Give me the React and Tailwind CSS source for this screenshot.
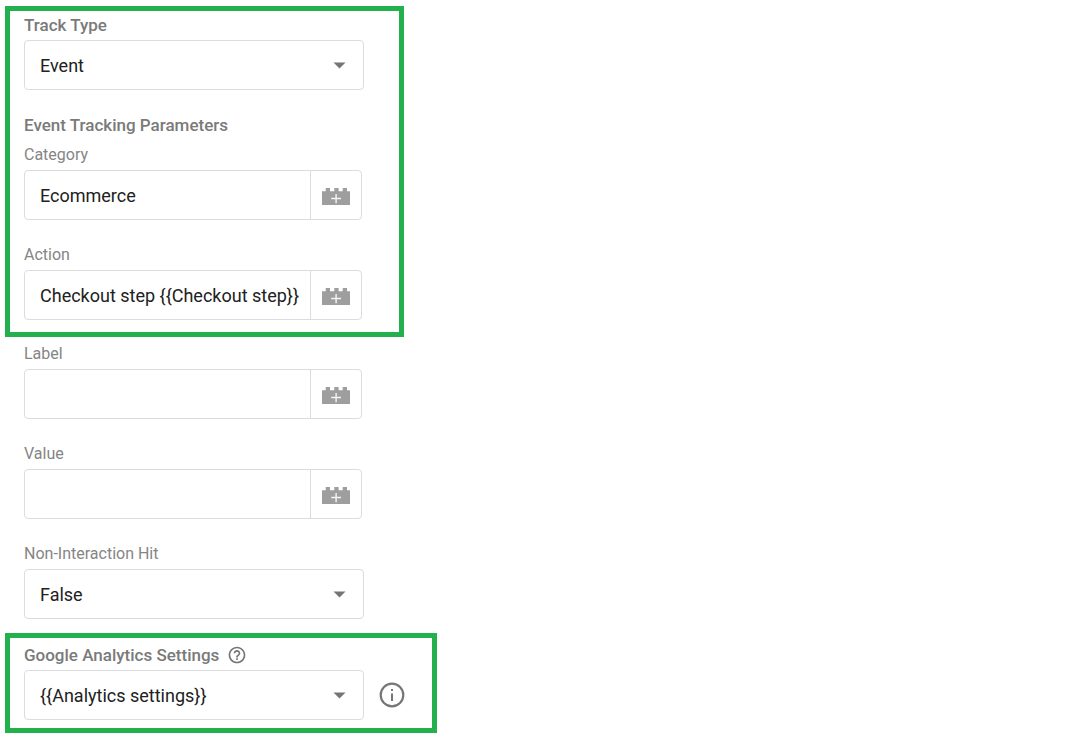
import React, { useId, useState } from "react";

function BrickIcon() {
  return (
    <svg width="28" height="17" viewBox="0 0 28 17" aria-hidden="true">
      <path
        fill="#9e9e9e"
        d="M0 3.3h3.7V0H8v3.3h4.3V0h4.3v3.3h4.1V0H25v3.3h3V17H0z"
      />
      <path stroke="#f5f5f5" strokeWidth="1.4" d="M9.2 10.5H19M14.1 6v9.2" />
    </svg>
  );
}

function HelpIcon() {
  return (
    <svg width="20" height="20" viewBox="0 0 24 24" fill="#757575" aria-hidden="true">
      <path d="M11 18h2v-2h-2v2zm1-16C6.48 2 2 6.48 2 12s4.48 10 10 10 10-4.48 10-10S17.52 2 12 2zm0 18c-4.41 0-8-3.59-8-8s3.59-8 8-8 8 3.59 8 8-3.59 8-8 8zm0-14c-2.21 0-4 1.79-4 4h2c0-1.1.9-2 2-2s2 .9 2 2c0 2-3 1.75-3 5h2c0-2.25 3-2.5 3-5 0-2.21-1.79-4-4-4z" />
    </svg>
  );
}

function InfoIcon() {
  return (
    <svg width="26" height="26" viewBox="0 0 26 26" aria-hidden="true">
      <circle cx="13" cy="13" r="11.3" fill="none" stroke="#757575" strokeWidth="2.2" />
      <path fill="#757575" d="M12 7h2v2h-2zM12 11.5h2v7.5h-2z" />
    </svg>
  );
}

function Label({ htmlFor, bold, children }) {
  return (
    <label
      htmlFor={htmlFor}
      className={
        bold
          ? "text-[17px] leading-[20px] font-medium text-[#7a7a7a]"
          : "text-[16px] leading-[20px] text-[#858585]"
      }
    >
      {children}
    </label>
  );
}

function SelectField({ label, options, bold, help, info }) {
  const id = useId();
  const [value, setValue] = useState(options[0]);

  return (
    <div className="flex flex-col gap-[5px]">
      <div className="flex h-5 items-center gap-2">
        <Label htmlFor={id} bold={bold}>
          {label}
        </Label>
        {help && (
          <button type="button" aria-label="Help">
            <HelpIcon />
          </button>
        )}
      </div>
      <div className="flex items-center gap-[15px]">
        <div className="relative w-full max-w-[340px]">
          <select
            id={id}
            value={value}
            onChange={(e) => setValue(e.target.value)}
            className="block h-[50px] w-full appearance-none rounded border border-[#dadce0] bg-white px-[15px] text-[18px] text-[#212121]"
          >
            {options.map((o) => (
              <option key={o}>{o}</option>
            ))}
          </select>
          <svg
            className="pointer-events-none absolute top-[22px] right-[18px]"
            width="13"
            height="7"
            viewBox="0 0 13 7"
            aria-hidden="true"
          >
            <path fill="#757575" d="M0.5 0.5h12l-6 6z" />
          </svg>
        </div>
        {info && (
          <button type="button" aria-label="Info">
            <InfoIcon />
          </button>
        )}
      </div>
    </div>
  );
}

function VariableField({ label, initial = "" }) {
  const id = useId();
  const [value, setValue] = useState(initial);

  return (
    <div className="flex flex-col gap-[5px]">
      <Label htmlFor={id}>{label}</Label>
      <div className="flex h-[50px] w-full max-w-[338px] rounded border border-[#dadce0]">
        <input
          id={id}
          type="text"
          value={value}
          onChange={(e) => setValue(e.target.value)}
          className="min-w-0 flex-1 bg-transparent pr-1 pl-[15px] text-[18px] text-[#212121]"
        />
        <button
          type="button"
          aria-label="Insert variable"
          className="flex w-[51px] items-center justify-center border-l border-[#dadce0] pt-[2px]"
        >
          <BrickIcon />
        </button>
      </div>
    </div>
  );
}

export default function App() {
  return (
    <main className="flex min-h-screen flex-col bg-white pt-[6px] pl-[5px] font-['Roboto',sans-serif]">
      {/* Track type + event parameters */}
      <section className="flex w-full max-w-[399px] flex-col gap-[25px] border-[5px] border-[#22b14c] px-[14px] pt-1 pb-3">
        <SelectField label="Track Type" options={["Event", "Page View"]} bold />
        <div className="flex flex-col gap-[10px]">
          <h2 className="text-[17px] leading-[20px] font-medium text-[#7a7a7a]">
            Event Tracking Parameters
          </h2>
          <VariableField label="Category" initial="Ecommerce" />
        </div>
        <VariableField label="Action" initial="Checkout step {{Checkout step}}" />
      </section>

      <section className="flex flex-col gap-[25px] px-[19px] pt-[7px] pb-[14px]">
        <VariableField label="Label" />
        <VariableField label="Value" />
        <SelectField label="Non-Interaction Hit" options={["False", "True"]} />
      </section>

      {/* Settings variable */}
      <section className="w-full max-w-[432px] border-[5px] border-[#22b14c] px-[14px] pt-[7px] pb-2">
        <SelectField
          label="Google Analytics Settings"
          options={["{{Analytics settings}}"]}
          bold
          help
          info
        />
      </section>
    </main>
  );
}
